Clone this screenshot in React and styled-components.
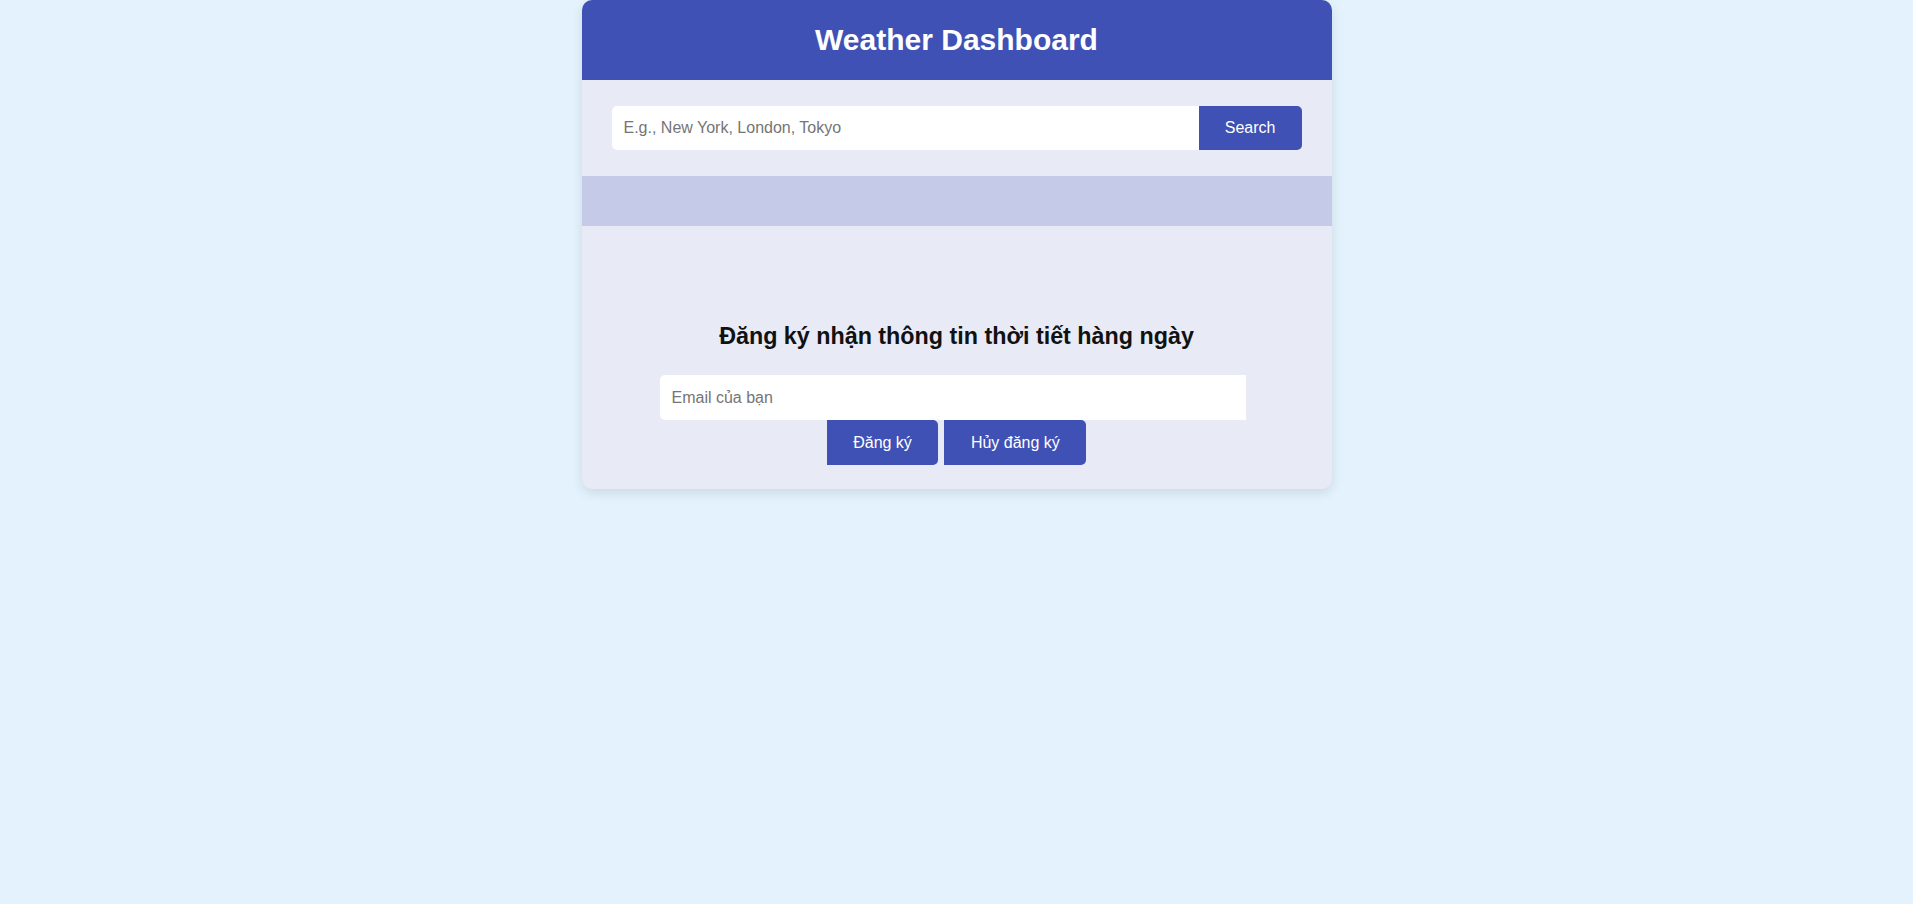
import React from 'react';
import styled, { createGlobalStyle } from 'styled-components';

const GlobalStyle = createGlobalStyle`
  html, body {
    margin: 0;
    padding: 0;
    background: #e3f2fd;
    font-family: "Liberation Sans", Arial, sans-serif;
  }
  body {
    min-height: 100vh;
  }
`;

const Card = styled.main`
  width: 750px;
  margin: 0 auto;
  background: #e8eaf6;
  border-radius: 10px;
  box-shadow: 0 4px 12px rgba(0, 0, 0, 0.1);
  overflow: hidden;
`;

const Header = styled.header`
  background: #3f51b5;
  height: 80px;
  display: flex;
  align-items: center;
  justify-content: center;

  h1 {
    margin: 0;
    color: #fff;
    font-size: 30px;
    font-weight: bold;
  }
`;

const SearchRow = styled.form`
  display: flex;
  padding: 26px 30px;
`;

const TextInput = styled.input`
  height: 44px;
  box-sizing: border-box;
  border: none;
  outline: none;
  padding: 0 12px;
  font-size: 16px;
  font-family: inherit;
  background: #fff;
  border-radius: 5px 0 0 5px;
  flex: 1;

  &::placeholder {
    color: #757575;
  }
`;

const EmailInput = styled(TextInput)`
  flex: none;
  width: 586px;
  height: 45px;
  margin-right: 8px;
`;

const Button = styled.button`
  height: ${p => p.$height || '44px'};
  box-sizing: border-box;
  border: none;
  background: #3f51b5;
  color: #fff;
  font-size: 16px;
  font-family: inherit;
  padding: 0 ${p => p.$pad || '26px'};
  border-radius: 0 5px 5px 0;
  cursor: pointer;
`;

const InfoBand = styled.section`
  height: 50px;
  background: #c5cae9;
`;

const Subscribe = styled.section`
  padding: 97px 30px 24px;
  text-align: center;

  h3 {
    margin: 0 0 25px;
    font-size: 23.3px;
    font-weight: bold;
    color: #111;
  }
`;

const SubscribeForm = styled.form`
  display: flex;
  flex-direction: column;
  align-items: center;
`;

const ButtonRow = styled.div`
  display: flex;
  gap: 6px;
`;

export default function App() {
  return (
    <>
      <GlobalStyle />
      <Card>
        <Header>
          <h1>Weather Dashboard</h1>
        </Header>
        <SearchRow onSubmit={e => e.preventDefault()}>
          <TextInput placeholder="E.g., New York, London, Tokyo" />
          <Button type="submit">Search</Button>
        </SearchRow>
        <InfoBand />
        <Subscribe>
          <h3>Đăng ký nhận thông tin thời tiết hàng ngày</h3>
          <SubscribeForm onSubmit={e => e.preventDefault()}>
            <EmailInput type="email" placeholder="Email của bạn" autoFocus />
            <ButtonRow>
              <Button $height="45px" $pad="26.5px" type="submit">Đăng ký</Button>
              <Button $height="45px" $pad="26.5px" type="button">Hủy đăng ký</Button>
            </ButtonRow>
          </SubscribeForm>
        </Subscribe>
      </Card>
    </>
  );
}
